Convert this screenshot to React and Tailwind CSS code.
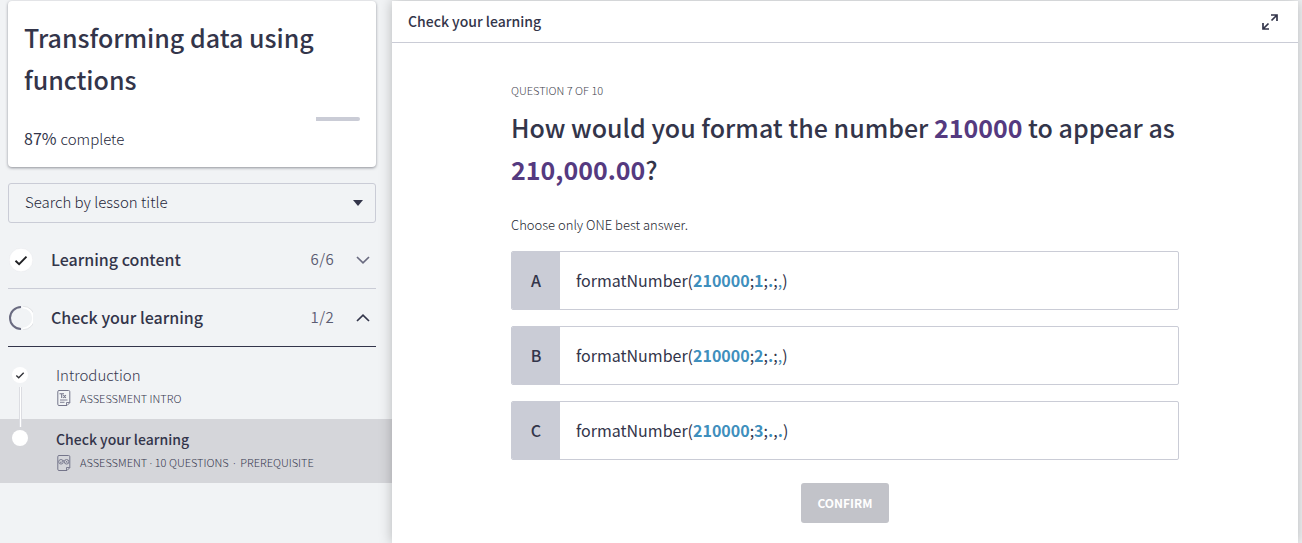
const sections = [
  { title: "Learning content", count: "6/6", open: false },
  { title: "Check your learning", count: "1/2", open: true },
];

const answers = [
  { letter: "A", parts: [["210000", "bold"], [";"], ["1", "bold"], [";"], [".", "bold"], [";"], [",", "blue"], [")"]] },
  { letter: "B", parts: [["210000", "bold"], [";"], ["2", "bold"], [";"], [".", "bold"], [";"], [",", "blue"], [")"]] },
  { letter: "C", parts: [["210000", "bold"], [";"], ["3", "bold"], [";"], [".", "bold"], [","], [".", "bold"], [")"]] },
];

const partStyles = {
  bold: "font-bold text-[#3f8fbd]",
  blue: "text-[#3f8fbd]",
};

function DoneBadge() {
  return (
    <svg className="size-6 shrink-0" viewBox="0 0 24 24" aria-hidden="true">
      <circle cx="12" cy="12" r="11.8" fill="#fff" stroke="#e3e4e8" strokeWidth="0.4" />
      <path d="M6.5 12.800l3.600 3.400 7.400-7.600" fill="none" stroke="#1f2023" strokeWidth="1.900" />
    </svg>
  );
}

function HalfBadge() {
  return (
    <svg className="size-6 shrink-0" viewBox="0 0 24 24" aria-hidden="true">
      <path d="M13.500 1.300a10.700 10.700 0 0 1 0 21.400" fill="none" stroke="#fff" strokeWidth="2" />
      <path d="M14 .3a11.600 11.600 0 0 1 0 23.400" fill="none" stroke="#cfd0d5" strokeWidth="0.500" />
      <path d="M12 1a11 11 0 0 0 0 22" fill="none" stroke="#6a6b80" strokeWidth="2" />
    </svg>
  );
}

function Chevron({ open }) {
  return (
    <svg className="ml-[22px] mr-1.5 h-2 w-3.5 shrink-0" viewBox="0 0 14 8" aria-hidden="true">
      <path
        d={open ? "M1 7l6-5.800L13 7" : "M1 1l6 5.800L13 1"}
        fill="none"
        stroke={open ? "#33354a" : "#6a6b80"}
        strokeWidth="1.700"
      />
    </svg>
  );
}

function PageOutline() {
  return (
    <>
      <path d="M11 15.500H3A1.200 1.200 0 0 1 1.800 14.300V1.700A1.200 1.200 0 0 1 3 .5h9.600A1.200 1.200 0 0 1 13.800 1.700V12.700L11 15.500" />
      <path d="M10.500 15.500V12.500H13.800" strokeWidth="0.900" />
    </>
  );
}

function IntroIcon() {
  return (
    <svg className="h-4 w-4 shrink-0" viewBox="0 0 16 16" fill="none" stroke="#74758a" aria-hidden="true">
      <PageOutline />
      <path d="M3.500 3.700h4.500M5.700 3.700V8M7.300 5.200l2.600 2.600M9.900 5.200L7.300 7.800" strokeWidth="1.100" />
      <path d="M4 10h7.500M4 12.300h4.500" strokeWidth="0.900" />
    </svg>
  );
}

function QuizIcon() {
  return (
    <svg className="h-4 w-4 shrink-0" viewBox="0 0 16 16" fill="none" stroke="#74758a" aria-hidden="true">
      <PageOutline />
      <circle cx="5" cy="6.800" r="2.300" strokeWidth="0.900" />
      <circle cx="10.600" cy="6.800" r="2.300" strokeWidth="0.900" />
      <path d="M4 6.800l1 .9L7.800 4.900M9.700 5.900l1.800 1.800M11.500 5.900L9.700 7.700" strokeWidth="0.900" />
    </svg>
  );
}

function Sidebar() {
  return (
    <aside className="w-[392px] shrink-0">
      <div className="pl-2 pr-4">
        <section className="rounded bg-white px-4 pt-[15px] pb-4 shadow-[0_1px_3px_rgba(60,62,75,0.55)]">
          <h1 className="text-[25px] leading-[42px] font-medium">Transforming data using functions</h1>
          <div
            role="progressbar"
            aria-label="Course progress"
            aria-valuenow={87}
            aria-valuemin={0}
            aria-valuemax={100}
            className="mt-[17px] flex h-1 justify-end rounded-full bg-white"
          >
            <div className="w-[13%] rounded-r-full bg-[#caccd6]" />
          </div>
          <p className="mt-1.5 flex h-6 items-baseline gap-1 text-[15px] leading-[22px]">
            <span className="text-base leading-[22px]">87%</span>
            <span className="font-light text-[#25273a]">complete</span>
          </p>
        </section>

        <div className="mt-4 grid items-center">
          <select
            aria-label="Search by lesson title"
            className="col-start-1 row-start-1 h-10 w-full appearance-none rounded-[3px] border border-[#caccd6] bg-transparent px-4 pb-0.5 text-[15px] font-light text-[#25273a]"
          >
            <option>Search by lesson title</option>
          </select>
          <svg className="pointer-events-none col-start-1 row-start-1 mr-3 h-1.5 w-3 justify-self-end" viewBox="0 0 12 6" aria-hidden="true">
            <path d="M1 0h10L6 6z" fill="#33354a" />
          </svg>
        </div>

        <div className="mt-2">
          {sections.map((s) => (
            <button
              key={s.title}
              type="button"
              aria-expanded={s.open}
              className={
                s.open
                  ? "flex h-[58px] w-full items-center border-b border-[#33354a] pl-px text-left"
                  : "flex h-[58px] w-full items-center border-b border-[#caccd6] pl-px text-left"
              }
            >
              {s.open ? <HalfBadge /> : <DoneBadge />}
              <span className="ml-[18px] flex-1 pb-0.5 text-base font-medium">{s.title}</span>
              <span className="text-[15px] font-[350] tracking-wide text-[#5b5c72]">{s.count}</span>
              <Chevron open={s.open} />
            </button>
          ))}
        </div>
      </div>

      <ol className="mt-2">
        <li className="flex h-16 gap-7 pl-3">
          <div className="flex w-4 flex-col items-center pt-3">
            <svg className="size-4 shrink-0" viewBox="0 0 16 16" aria-hidden="true">
              <circle cx="8" cy="8" r="8" fill="#fff" />
              <path d="M4.300 8.400l2.400 2.300 5-5" fill="none" stroke="#33343a" strokeWidth="1.400" />
            </svg>
            <span className="z-10 mt-1 h-10 w-[3px] shrink-0 border-x border-[#dcdde2] bg-white" />
          </div>
          <a href="#introduction" className="block pt-[9px] text-[#36384f]">
            <span className="block text-[15px] leading-[22px] font-light">Introduction</span>
            <span className="mt-0.5 flex items-center gap-2 text-[11px] leading-5 font-light">
              <IntroIcon />
              ASSESSMENT INTRO
            </span>
          </a>
        </li>
        <li className="flex h-16 gap-7 bg-[#d5d6da] pl-3">
          <div className="w-4 pt-[11px]">
            <div className="size-4 rounded-full bg-white" />
          </div>
          <a href="#check" aria-current="page" className="block pt-[9px] text-[#36384f]">
            <span className="block text-sm leading-[22px] font-medium text-[#33354a]">Check your learning</span>
            <span className="mt-0.5 flex items-center gap-2 text-[11px] leading-5 font-light">
              <QuizIcon />
              <span>
                ASSESSMENT <span className="font-['Noto_Sans']">·</span> 10 QUESTIONS{" "}
                <span className="px-0.5 font-['Noto_Sans']">·</span> PREREQUISITE
              </span>
            </span>
          </a>
        </li>
      </ol>
    </aside>
  );
}

function Answer({ letter, parts }) {
  return (
    <label className="flex h-[59px] cursor-pointer overflow-hidden rounded-[2px] border border-[#caccd6] bg-white">
      <input type="radio" name="answer" value={letter} className="sr-only" />
      <span className="flex w-12 items-center justify-center bg-[#caccd6] pb-0.5 font-medium">{letter}</span>
      <span className="flex items-center px-4 pb-0.5 text-base">
        <span>
          formatNumber(
          {parts.map(([text, kind], i) => (
            <span key={i} className={partStyles[kind]}>{text}</span>
          ))}
        </span>
      </span>
    </label>
  );
}

export default function App() {
  return (
    <div className="flex min-h-screen bg-[#f1f3f5] pt-px pr-1 font-['Noto_Sans_CJK_SC','Noto_Sans',sans-serif] text-[#33354a]">
      <Sidebar />
      <main className="relative flex-1 bg-white shadow-[0_0_12px_rgba(0,0,0,0.25)]">
        <header className="flex h-[42px] items-center justify-between border-b border-[#caccd6] pl-4 pr-5">
          <h2 className="pb-0.5 text-sm font-medium">Check your learning</h2>
          <button type="button" aria-label="Full screen">
            <svg className="size-4" viewBox="0 0 16 16" fill="none" stroke="#33354a" strokeWidth="1.700" aria-hidden="true">
              <path d="M9.500 6.500L15 1M9 1H15v6M6.500 9.500L1 15M1 9V15h6" />
            </svg>
          </button>
        </header>

        <form className="mx-auto max-w-[668px] pt-[37px]" onSubmit={(e) => e.preventDefault()}>
          <p className="text-[11px] leading-5 font-light text-[#45464f]">QUESTION 7 OF 10</p>
          <h3 className="mt-1.5 text-[25px] leading-[42px] font-medium">
            How would you format the number <strong className="font-bold text-[#553a80]">210000</strong> to appear as{" "}
            <strong className="font-bold text-[#553a80]">210,000.00</strong>?
          </h3>
          <fieldset className="mt-[25px]">
            <legend className="text-[13px] leading-5 font-light text-[#1d1f30]">Choose only ONE best answer.</legend>
            <div className="flex flex-col gap-4 pt-4">
              {answers.map((a) => (
                <Answer key={a.letter} {...a} />
              ))}
            </div>
          </fieldset>
          <button
            type="submit"
            className="mx-auto mt-[23px] block h-10 rounded-[3px] bg-[#c2c3c9] px-4 text-xs font-bold text-white"
          >
            CONFIRM
          </button>
        </form>
      </main>
    </div>
  );
}
